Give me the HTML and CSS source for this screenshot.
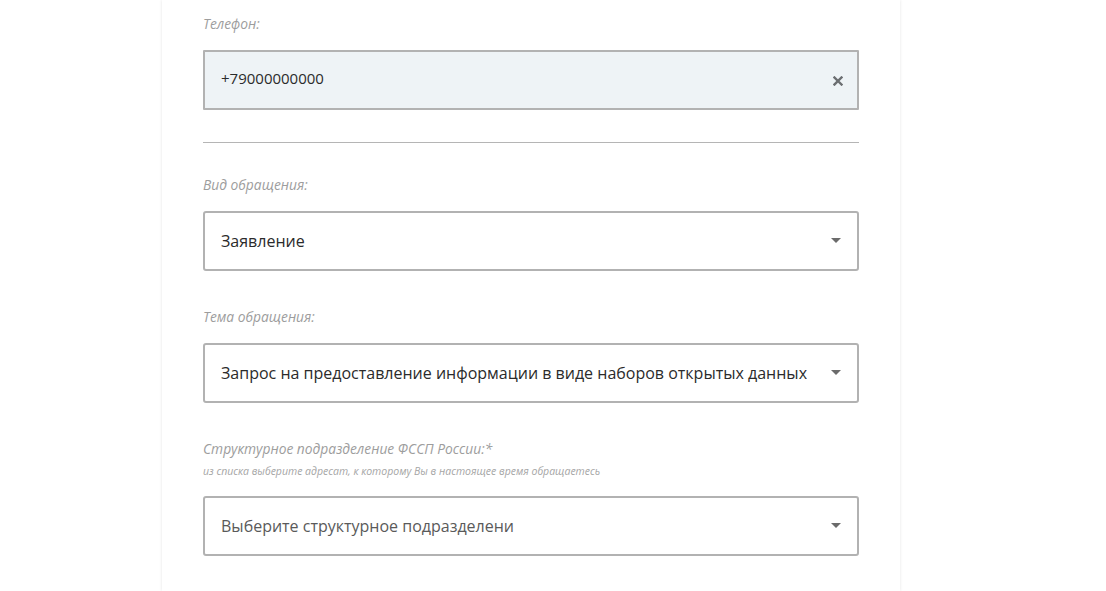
FILE: index.html
```html
<!DOCTYPE html>
<html lang="ru">
<head>
    <meta charset="UTF-8">
    <title>Обращение</title>
    <link rel="stylesheet" href="styles.css">
</head>
<body>
    <div class="card">
        <div class="field phone">
            <div class="label">Телефон:</div>
            <div class="input filled">
                <span class="value">+79000000000</span>
                <svg class="clear" width="10" height="10" viewBox="0 0 10 10">
                    <path d="M1.5 1.5 L8.5 8.5 M8.5 1.5 L1.5 8.5" stroke="#6b6e71" stroke-width="2.4" stroke-linecap="square"/>
                </svg>
            </div>
        </div>

        <hr class="divider">

        <div class="field">
            <div class="label">Вид обращения:</div>
            <div class="input select">
                <span class="value">Заявление</span>
                <svg class="arrow" width="10" height="5" viewBox="0 0 10 5"><path d="M0 0 H10 L5 5 Z" fill="#6b6b6b"/></svg>
            </div>
        </div>

        <div class="field">
            <div class="label">Тема обращения:</div>
            <div class="input select">
                <span class="value">Запрос на предоставление информации в виде наборов открытых данных</span>
                <svg class="arrow" width="10" height="5" viewBox="0 0 10 5"><path d="M0 0 H10 L5 5 Z" fill="#6b6b6b"/></svg>
            </div>
        </div>

        <div class="field">
            <div class="label">Структурное подразделение ФССП России:*</div>
            <div class="hint">из списка выберите адресат, к которому Вы в настоящее время обращаетесь</div>
            <div class="input select">
                <span class="value placeholder">Выберите структурное подразделени</span>
                <svg class="arrow" width="10" height="5" viewBox="0 0 10 5"><path d="M0 0 H10 L5 5 Z" fill="#6b6b6b"/></svg>
            </div>
        </div>
    </div>
</body>
</html>
```

FILE: styles.css
```css
html, body {
    margin: 0;
    padding: 0;
    background-color: #fff;
    font-family: 'Open Sans', 'Liberation Sans', sans-serif;
}
.card {
    margin-left: 162px;
    width: 738px;
    height: 591px;
    box-sizing: border-box;
    padding: 15px 41px 0 41px;
    background-color: #fff;
    box-shadow: 0 0 3px rgba(0, 0, 0, 0.11);
    overflow: hidden;
}
.field {
    width: 656px;
    margin-bottom: 37px;
}
.field.phone {
    margin-bottom: 0;
}
.label {
    font-size: 13.8px;
    line-height: 18px;
    font-style: italic;
    color: #9d9d9d;
    margin-bottom: 17px;
}
.hint {
    font-size: 10.5px;
    line-height: 14px;
    font-style: italic;
    color: #a5a5a5;
    margin-top: -11px;
    margin-bottom: 18px;
}
.input {
    display: flex;
    align-items: center;
    justify-content: space-between;
    height: 60px;
    box-sizing: border-box;
    padding: 0 16px 0 16px;
    border: 2px solid #b2b2b2;
    border-radius: 3px;
    background-color: #fff;
}
.input.filled {
    background-color: #eef3f6;
    border-radius: 1px;
}
.value {
    font-size: 16px;
    color: #2b2b2b;
    white-space: nowrap;
    overflow: hidden;
}
.filled .value {
    font-size: 15px;
    margin-top: -4px;
}
.placeholder {
    color: #5a5a5a;
}
.clear {
    margin-right: -2px;
    margin-top: 2px;
}
.arrow {
    flex-shrink: 0;
    margin-left: 20px;
    margin-top: -1px;
}
.divider {
    width: 656px;
    margin: 32px 0 33px 0;
    border: none;
    border-top: 1px solid #b5b5b5;
}
```
